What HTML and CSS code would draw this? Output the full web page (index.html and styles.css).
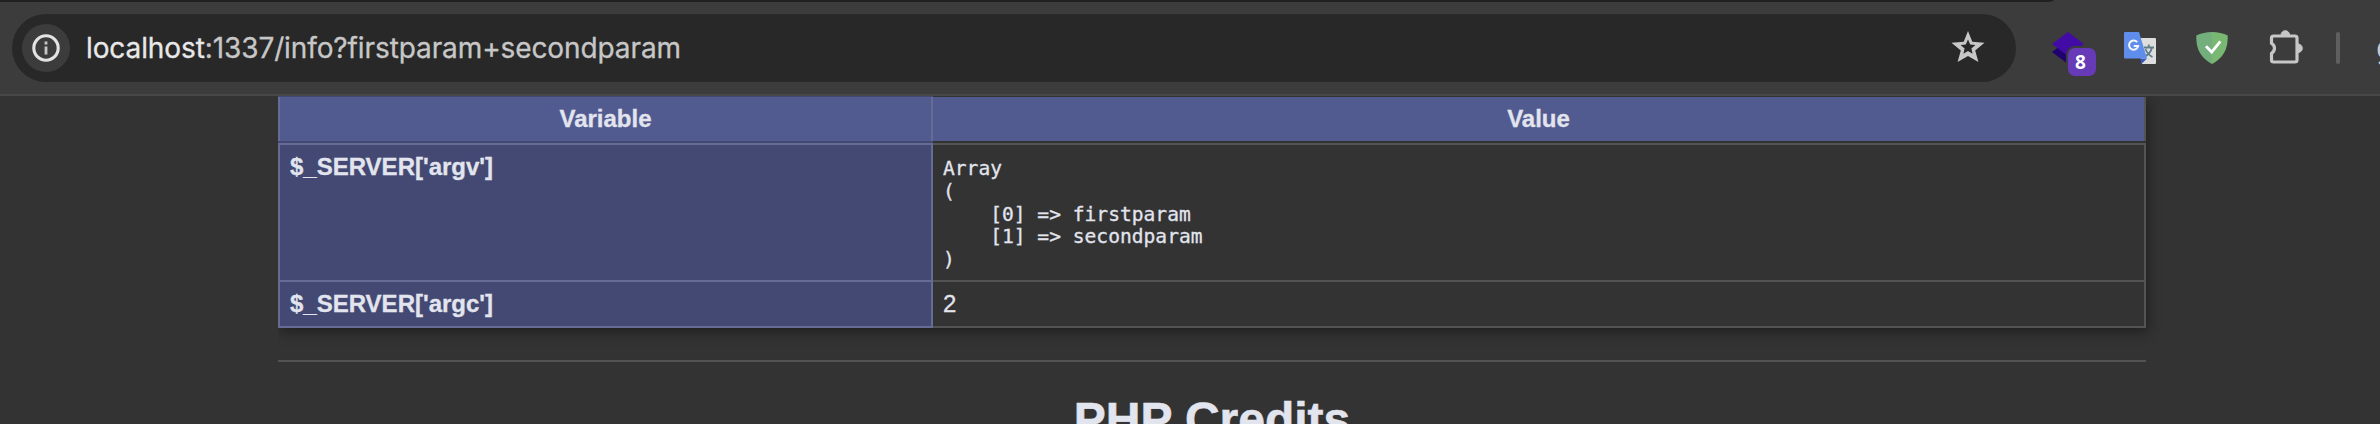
FILE: index.html
```html
<!DOCTYPE html>
<html lang="en">
<head>
<meta charset="utf-8">
<title>phpinfo()</title>
<link rel="stylesheet" href="styles.css">
</head>
<body>
<header class="toolbar">
  <div class="tabstrip"></div>
  <div class="toolbar-row">
    <div class="omnibox">
      <div class="site-info">
        <svg width="28" height="28" viewBox="0 0 28 28"><circle cx="14" cy="14" r="12.2" fill="none" stroke="#e3e3e3" stroke-width="3.100"/><path d="M14 12.500v8M14 7.400v3" stroke="#c7c7c7" stroke-width="2.800"/></svg>
      </div>
      <div class="url"><span class="host">localhost</span>:1337/info?firstparam+secondparam</div>
      <svg class="star" width="34" height="32" viewBox="0 0 34 32"><path fill="#c7c7c7" fill-rule="evenodd" d="M17 0l4.300 10.800 12.200 1-9.300 7.700L27.400 31 17 25 6.600 31l3.200-11.500L.5 11.800l12.200-1zM17 8.500l-2.200 5-5.200.5 4 3.500-1.200 5.200L17 20l4.600 2.700-1.200-5.200 4-3.500-5.200-.5z"/></svg>
    </div>
    <div class="ext ext-stack">
      <svg width="32" height="32" viewBox="0 0 32 32"><path d="M0 20 16 8l16 12-16 12z" fill="#1f0270"/><path d="M0 12 16 0l16 12-16 12z" fill="#430ba5"/></svg>
      <span class="badge">8</span>
    </div>
    <svg class="ext" width="32" height="32" viewBox="0 0 32 32"><path d="M12 6h19q1 0 1 1v24q0 1-1 1H18z" fill="#dedede"/><path d="M16.500 26.500H23L17.500 32z" fill="#3c55bd"/><path d="M20 15.500h10M24.800 12.500v3M28 15.500c-1 4.500-4 7.500-8 9.500M21.500 17c1.500 4 4 6.500 7 8" fill="none" stroke="#607d8b" stroke-width="1.800"/><path d="M1 0h14l8 26.500H1q-1 0-1-1V1q0-1 1-1z" fill="#5f8dec"/><path d="M13.200 10.200a4.600 4.600 0 1 0 1 3.700H9.700" fill="none" stroke="#f3f6fd" stroke-width="2"/></svg>
    <svg class="ext" width="32" height="32" viewBox="0 0 32 32"><path d="M16 0C10.500 0 4.500 1.200.3 3.500c0 9 .6 20 15.700 28.500z" fill="#74ae7c"/><path d="M16 0c5.500 0 11.500 1.200 15.700 3.500 0 9-.6 20-15.700 28.500z" fill="#79b873"/><path d="M10 14.300l5.700 5.800L24.300 9.300" fill="none" stroke="#fff" stroke-width="2.800"/></svg>
    <svg class="ext puzzle" width="36" height="36" viewBox="0 0 36 36"><path d="M5.500 6H27q2 0 2 2v22q0 2-2 2H5.500q-2 0-2-2v-6.700a5.600 5.600 0 0 0 0-9.900V8q0-2 2-2z" fill="none" stroke="#c7c7c7" stroke-width="3.200" stroke-linejoin="round"/><path d="M13 5a4.300 4.300 0 0 1 8.600 0zM30 14a4.300 4.300 0 0 1 0 8.600z" fill="#c7c7c7" stroke="#c7c7c7"/></svg>
    <div class="divider"></div>
    <div class="next-button">g</div>
  </div>
</header>
<main class="page">
  <table class="info">
    <thead><tr><th>Variable</th><th>Value</th></tr></thead>
    <tbody>
      <tr class="row-argv"><td class="e">$_SERVER['argv']</td><td class="v"><pre>Array
(
    [0] =&gt; firstparam
    [1] =&gt; secondparam
)
</pre></td></tr>
      <tr class="row-argc"><td class="e">$_SERVER['argc']</td><td class="v">2</td></tr>
    </tbody>
  </table>
  <hr>
  <h1>PHP Credits</h1>
</main>
</body>
</html>
```

FILE: styles.css
```css
* { box-sizing: border-box; }
body {
  margin: 0;
  height: 424px;
  overflow: hidden;
  background: #333;
  color: #e2e4ee;
  font-family: "Liberation Sans", Arial, sans-serif;
  font-size: 24px;
}
.toolbar {
  height: 96px;
  background: #3c3c3c;
  border-bottom: 2px solid #474747;
  overflow: hidden;
}
.tabstrip {
  width: 2054px;
  height: 2px;
  background: #202020;
  border-bottom-right-radius: 10px 2px;
}
.toolbar-row {
  display: flex;
  align-items: center;
  height: 92px;
  padding-left: 12px;
}
.toolbar-row > * { flex-shrink: 0; }
.omnibox {
  display: flex;
  align-items: center;
  width: 2004px;
  height: 68px;
  margin-right: 36px;
  padding: 0 31px 0 10px;
  border-radius: 34px;
  background: #282828;
}
.site-info {
  display: flex;
  align-items: center;
  justify-content: center;
  width: 48px;
  height: 48px;
  border-radius: 50%;
  background: #3c3c3c;
}
.url {
  flex: 1;
  margin-left: 16px;
  color: #c7c7c7;
  font-family: Inter, sans-serif;
  font-size: 28px;
  letter-spacing: -0.1px;
  white-space: nowrap;
  -webkit-text-stroke: 0.3px;
}
.host { color: #e8e8e8; }
.star { margin-bottom: 2px; }
.ext { width: 32px; height: 32px; margin-right: 40px; }
.ext-stack { position: relative; }
.badge {
  position: absolute;
  left: 16px;
  top: 16px;
  width: 28px;
  height: 28px;
  border-radius: 7px;
  background: #673ab7;
  box-shadow: 0 0 0 2px #3c3c3c;
  color: #fff;
  font: bold 19px/28px "Open Sans", sans-serif;
  text-align: center;
  padding-right: 3px;
}
.puzzle { width: 36px; height: 36px; margin-right: 32px; }
.divider { width: 4px; height: 32px; border-radius: 2px; background: #5f5f5f; }
.next-button {
  margin-left: 36px;
  color: #c7c7c7;
  font: 32px/36px Inter, sans-serif;
}
.page { width: 1868px; height: 328px; overflow: visible; margin: 0 auto 0 278px; }
.info {
  width: 1868px;
  border-spacing: 0;
  table-layout: fixed;
  box-shadow: 2px 4px 12px rgba(0, 0, 0, 0.4);
  clip-path: inset(0 -20px -20px 0);
}
.info th, .info td { padding: 0; line-height: 27px; }
.info th {
  height: 47px;
  padding-bottom: 2px;
  border: solid #333;
  border-width: 1px 0 2px;
  background: #525b90;
  text-align: center;
}
.info th:first-child {
  width: 655px;
  border-color: #434972;
  box-shadow: inset 2px 0 #666c96, inset -2px 0 #666c96;
}
.info th:last-child {
  padding-right: 2px;
  box-shadow: inset -2px 0 #535353;
}
.info td {
  border-top: 2px solid #535353;
  vertical-align: top;
  padding: 8px 10px 0;
}
.info .e {
  background: #434972;
  border: 2px solid #666c96;
  border-bottom-width: 0;
  font-weight: bold;
}
.info .v { background: #333; border-right: 2px solid #535353; }
.info th, .info td { -webkit-text-stroke: 0.3px; }
.row-argv td { height: 137px; }
.row-argc td { height: 48px; border-bottom: 2px solid #535353; }
.row-argc .e { border-bottom: 2px solid #666c96; }
.info pre {
  margin: 5px 0 0;
  font: 19.6px/22.8px "DejaVu Sans Mono", monospace;
}
hr { height: 2px; margin: 32px 0 0; border: 0; background: #535353; }
h1 {
  margin: 30px 0 0;
  font-size: 48px;
  line-height: 55px;
  text-align: center;
  -webkit-text-stroke: 0.6px;
}
```
